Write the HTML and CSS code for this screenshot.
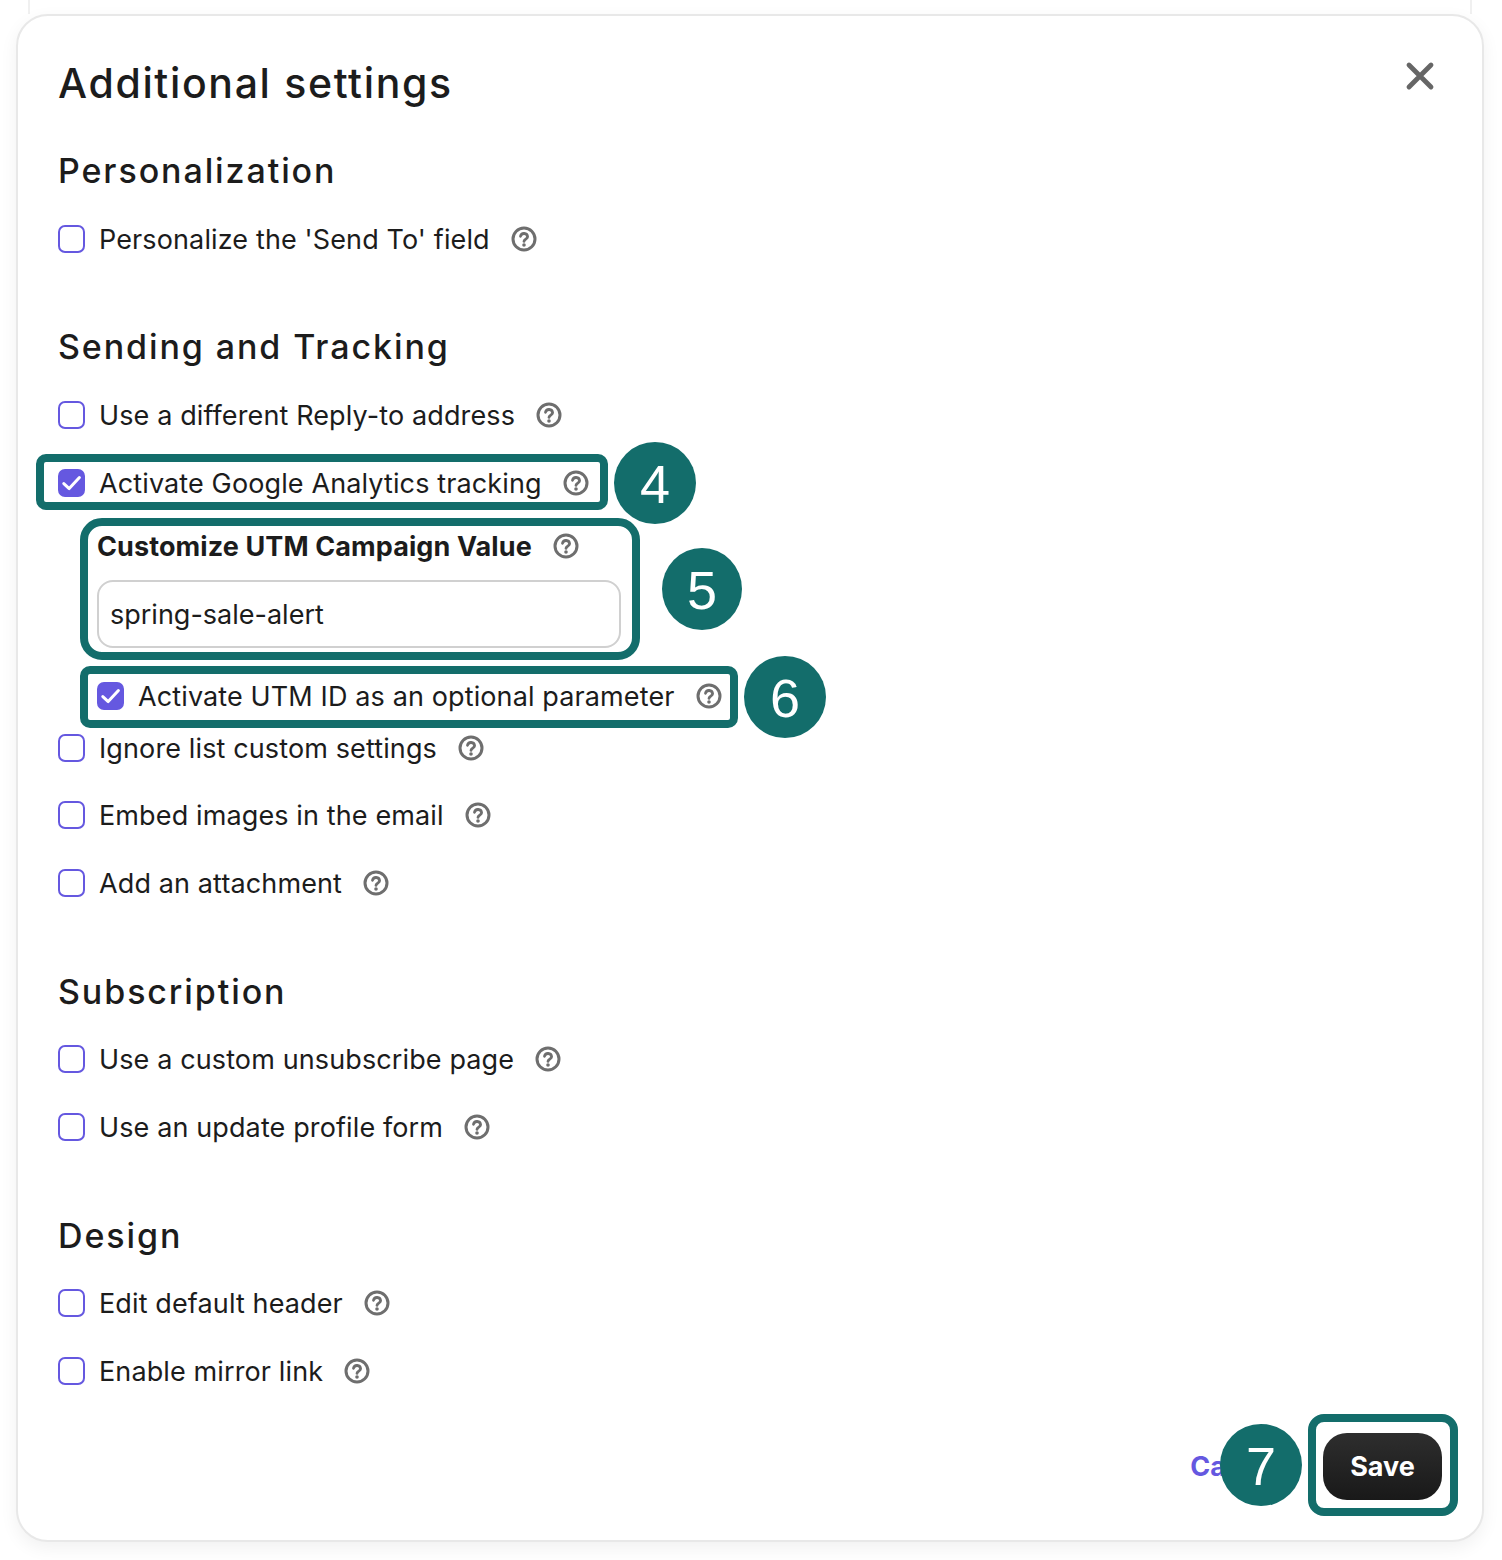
FILE: index.html
```html
<!DOCTYPE html>
<html lang="en">
<head>
<meta charset="utf-8">
<title>Additional settings</title>
<link rel="stylesheet" href="styles.css">
</head>
<body>
<svg width="0" height="0" class="defs">
  <symbol id="help" viewBox="0 0 26 26">
    <circle cx="13" cy="13" r="11" fill="none" stroke="currentColor" stroke-width="3"/>
    <path d="M9.5 10.3a3.6 3.6 0 0 1 7.1.5c0 2.3-3.4 2.4-3.6 4.5" fill="none" stroke="currentColor" stroke-width="2.8" stroke-linecap="round"/>
    <circle cx="13" cy="19" r="1.8" fill="currentColor"/>
  </symbol>
  <symbol id="check" viewBox="0 0 23 24">
    <path d="M3.8 12.6l5.4 5L19.4 6.6" fill="none" stroke="#fff" stroke-width="3" stroke-linecap="round" stroke-linejoin="round"/>
  </symbol>
</svg>
<div class="backdrop"></div>
<main class="modal">
  <header class="modal-head">
    <h1 class="title">Additional settings</h1>
    <button class="close" aria-label="Close">
      <svg width="30" height="30" viewBox="0 0 30 30"><path d="M4 4l22 22M26 4L4 26" stroke="#666" stroke-width="4.8" stroke-linecap="round"/></svg>
    </button>
  </header>

  <section class="section first">
    <h2 class="section-title">Personalization</h2>
    <label class="row"><span class="box"></span><span class="label">Personalize the 'Send To' field</span><svg class="help"><use href="#help"/></svg></label>
  </section>

  <section class="section second">
    <h2 class="section-title">Sending and Tracking</h2>
    <label class="row"><span class="box"></span><span class="label">Use a different Reply-to address</span><svg class="help"><use href="#help"/></svg></label>
    <label class="row"><span class="box on"><svg class="tick"><use href="#check"/></svg></span><span class="label">Activate Google Analytics tracking</span><svg class="help"><use href="#help"/></svg></label>
    <div class="utm">
      <div class="utm-label"><strong class="strong">Customize UTM Campaign Value</strong><svg class="help"><use href="#help"/></svg></div>
      <div class="input">spring-sale-alert</div>
      <label class="row utm-id"><span class="box on"><svg class="tick"><use href="#check"/></svg></span><span class="label">Activate UTM ID as an optional parameter</span><svg class="help"><use href="#help"/></svg></label>
    </div>
    <label class="row tight"><span class="box"></span><span class="label">Ignore list custom settings</span><svg class="help"><use href="#help"/></svg></label>
    <label class="row"><span class="box"></span><span class="label">Embed images in the email</span><svg class="help"><use href="#help"/></svg></label>
    <label class="row"><span class="box"></span><span class="label">Add an attachment</span><svg class="help"><use href="#help"/></svg></label>
  </section>

  <section class="section compact">
    <h2 class="section-title">Subscription</h2>
    <label class="row wide"><span class="box"></span><span class="label">Use a custom unsubscribe page</span><svg class="help"><use href="#help"/></svg></label>
    <label class="row wide"><span class="box"></span><span class="label">Use an update profile form</span><svg class="help"><use href="#help"/></svg></label>
  </section>

  <section class="section compact">
    <h2 class="section-title">Design</h2>
    <label class="row wide"><span class="box"></span><span class="label">Edit default header</span><svg class="help"><use href="#help"/></svg></label>
    <label class="row wide"><span class="box"></span><span class="label">Enable mirror link</span><svg class="help"><use href="#help"/></svg></label>
  </section>

  <footer class="footer">
    <a class="cancel">Cancel</a>
    <button class="save">Save</button>
  </footer>
</main>

<div class="mark mark-4"></div>
<div class="mark mark-5"></div>
<div class="mark mark-6"></div>
<div class="mark mark-7"></div>
<div class="badge badge-4">4</div>
<div class="badge badge-5">5</div>
<div class="badge badge-6">6</div>
<div class="badge badge-7">7</div>
</body>
</html>
```

FILE: styles.css
```css
* { box-sizing: border-box; }
html, body { margin: 0; padding: 0; background: #fff; }
body {
  position: relative;
  width: 1502px;
  height: 1560px;
  overflow: hidden;
  padding: 14px 0 0 16px;
  font-family: Inter, "Liberation Sans", sans-serif;
  color: #1c1c1c;
}
.defs { position: absolute; }
.backdrop {
  position: absolute;
  left: 28px;
  top: 0;
  width: 1444px;
  height: 14px;
  border-left: 2px solid #f0f0f0;
  border-right: 2px solid #f0f0f0;
}
.modal {
  position: relative;
  width: 1468px;
  height: 1528px;
  background: #fff;
  border: 2px solid #e8e8e8;
  border-radius: 32px;
  box-shadow: 0 6px 18px rgba(0, 0, 0, 0.06);
  padding: 42px 41px 0 40px;
}
.modal-head {
  display: flex;
  justify-content: space-between;
  align-items: flex-start;
  height: 50px;
  padding-right: 6px;
}
.title {
  margin: 0;
  font-size: 41px;
  line-height: 50px;
  font-weight: 500;
  letter-spacing: 1.65px;
}
.close {
  width: 30px;
  height: 30px;
  margin-top: 3px;
  padding: 0;
  border: 0;
  background: none;
}
.section { margin-top: 75px; }
.section.first { margin-top: 43px; }
.section.second { margin-top: 74px; }
.section-title {
  margin: 0 0 34px;
  font-size: 34px;
  line-height: 40px;
  font-weight: 500;
  letter-spacing: 1.9px;
}
.compact .section-title { margin-bottom: 33px; }
.row {
  display: flex;
  align-items: center;
  height: 28px;
  margin-top: 39.5px;
}
.row.wide { margin-top: 40px; }
.section-title + .row { margin-top: 0; }
.box {
  flex: none;
  width: 27px;
  height: 28px;
  border: 2px solid #6558e0;
  border-radius: 7px;
  background: #fff;
}
.box.on { background: #6558e0; }
.tick { display: block; width: 23px; height: 24px; }
.label {
  margin-left: 14px;
  padding-top: 2px;
  font-size: 27px;
  line-height: 34px;
  white-space: nowrap;
  letter-spacing: 0.12px;
}
.help {
  flex: none;
  width: 26px;
  height: 26px;
  margin-left: 21px;
  color: #6e6e6e;
}
.utm { padding-left: 39px; }
.utm-label {
  display: flex;
  align-items: center;
  height: 28px;
  margin-top: 35px;
}
.strong { padding-top: 2px; font-size: 27px; line-height: 34px; font-weight: 700; white-space: nowrap; letter-spacing: 0.1px; }
.input {
  width: 524px;
  height: 68px;
  margin-top: 20px;
  padding-left: 11px;
  border: 2px solid #d0d0d0;
  border-radius: 16px;
  font-size: 27px;
  line-height: 66px;
}
.utm-id { margin-top: 34px; }
.row.tight { margin-top: 24px; }
.footer {
  display: flex;
  justify-content: flex-end;
  align-items: center;
  gap: 41px;
  margin-top: 48px;
  margin-right: -1px;
}
.cancel { font-size: 27px; font-weight: 700; color: #6558e0; }
.save {
  width: 119px;
  height: 67px;
  border: 0;
  border-radius: 24px;
  background: linear-gradient(#2e2e2e, #191919);
  color: #fff;
  font: 700 27px Inter, "Liberation Sans", sans-serif;
}
.mark {
  position: absolute;
  border: 8px solid #136d6b;
  border-radius: 10px;
}
.mark-4 { left: 36px; top: 454px; width: 572px; height: 56px; }
.mark-5 { left: 80px; top: 518px; width: 560px; height: 142px; border-radius: 22px; }
.mark-6 { left: 80px; top: 666px; width: 658px; height: 62px; }
.mark-7 { left: 1308px; top: 1414px; width: 150px; height: 102px; border-radius: 16px; }
.badge {
  position: absolute;
  display: flex;
  align-items: center;
  justify-content: center;
  width: 82px;
  height: 82px;
  padding-top: 1px;
  border-radius: 50%;
  background: #136d6b;
  color: #fff;
  font: 54px "Liberation Sans", Arial, sans-serif;
}
.badge-4 { left: 614px; top: 442px; }
.badge-5 { left: 662px; top: 548px; width: 80px; }
.badge-6 { left: 744px; top: 656px; }
.badge-7 { left: 1220px; top: 1424px; }
```
